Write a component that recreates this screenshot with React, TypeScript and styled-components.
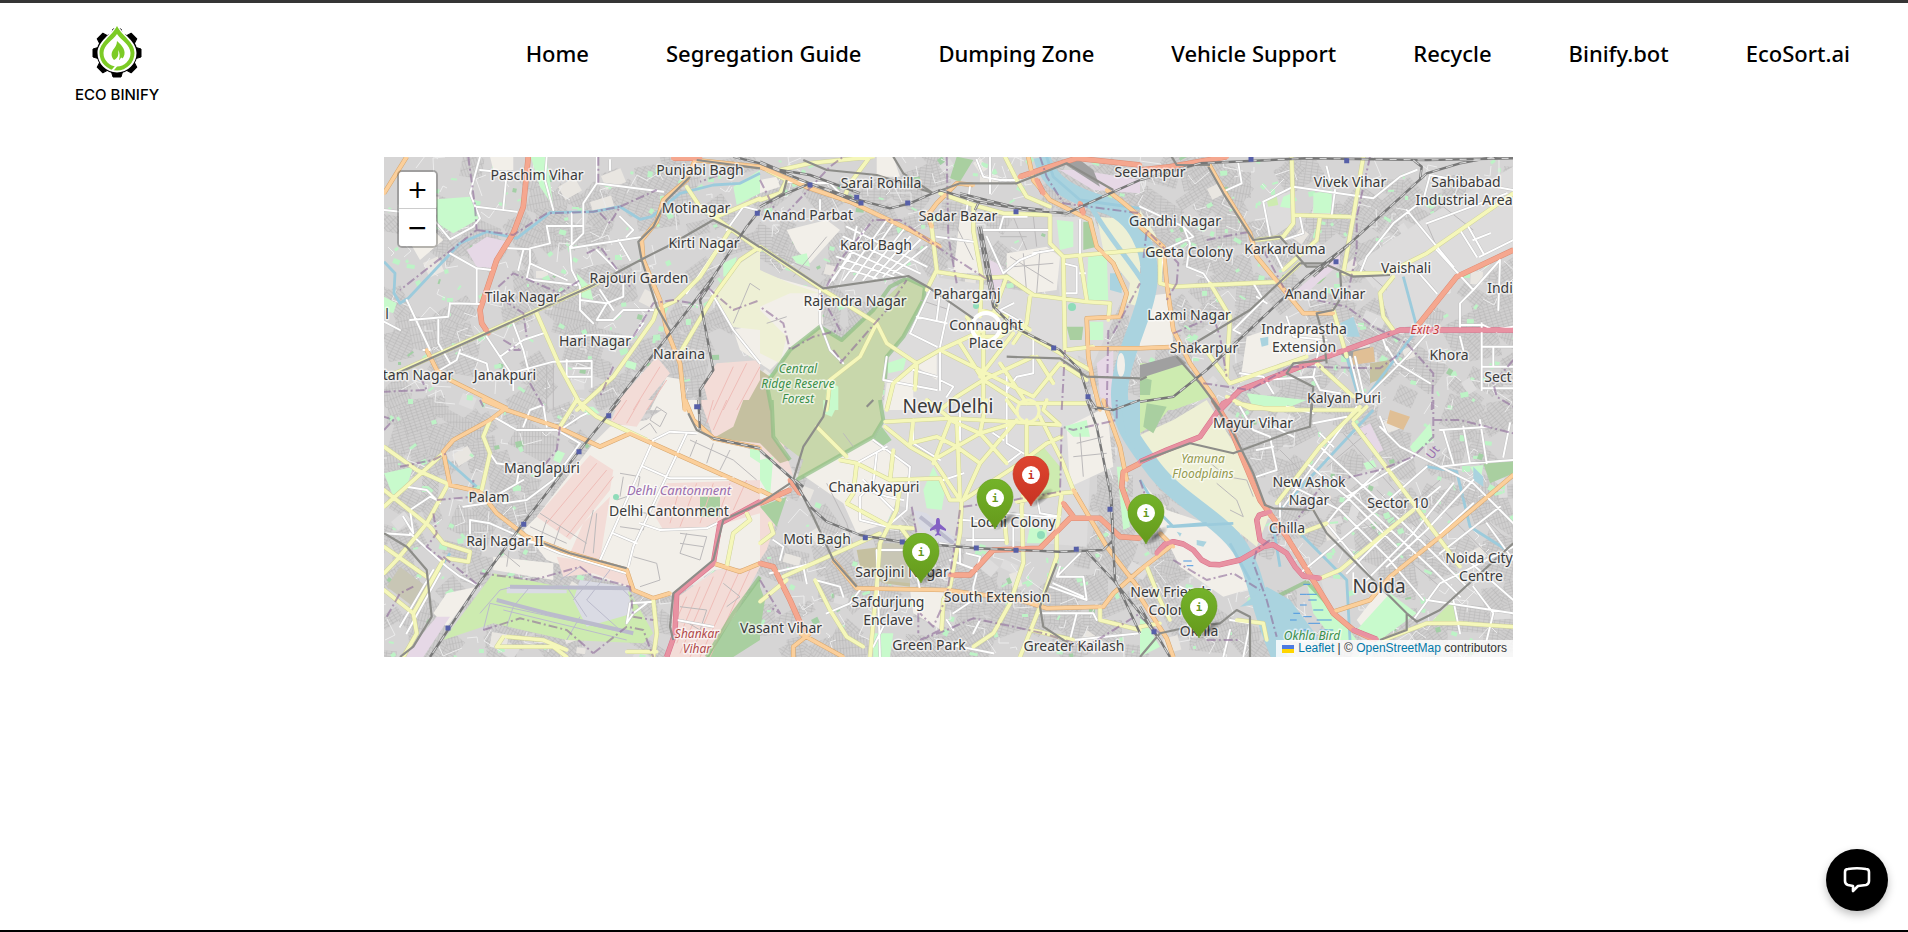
import React from "react";
import styled, { createGlobalStyle } from "styled-components";

const GlobalStyle = createGlobalStyle`
  *, *::before, *::after { box-sizing: border-box; }
  body { margin: 0; background: #fff; color: #000; font-family: "Noto Sans", sans-serif; }
`;

const Page = styled.div`
  min-height: 100vh;
  display: flex;
  flex-direction: column;
  border-top: 3px solid #353535;
  border-bottom: 2px solid #000;
`;

const Header = styled.header`
  display: flex;
  justify-content: space-between;
  align-items: flex-start;
  padding: 22px 58px 0 75px;
  margin-bottom: 52px;
`;

const Brand = styled.a`
  display: flex;
  flex-direction: column;
  align-items: center;
  gap: 6px;
  height: 80px;
  color: #000;
  text-decoration: none;
  font: 500 15px/20px Inter, sans-serif;
`;

const Nav = styled.nav`
  display: flex;
  gap: 77px;
  padding-top: 12px;
`;

const NavLink = styled.a`
  color: #000;
  text-decoration: none;
  font-size: 22px;
  font-weight: 500;
  line-height: 32px;
  white-space: nowrap;
`;

const Main = styled.main`
  flex: 1;
  padding: 0 395px 0 384px;
`;

const MapPanel = styled.section`
  position: relative;
  height: 500px;
  overflow: hidden;
  background: #ddd;
`;

const MapCanvas = styled.svg`
  display: block;
  width: 100%;
  height: 100%;
  font-family: "Noto Sans", sans-serif;
`;

const ZoomControl = styled.div`
  position: absolute;
  top: 13px;
  left: 13px;
  display: flex;
  flex-direction: column;
  border: 2px solid rgba(0, 0, 0, 0.25);
  border-radius: 5px;
  background-clip: padding-box;
`;

const ZoomButton = styled.button`
  width: 37px;
  height: 37px;
  padding: 0;
  border: 0;
  border-bottom: 1px solid #ccc;
  border-radius: 3px 3px 0 0;
  background: #fff;
  color: #000;
  font: 25px/36px "DejaVu Sans", sans-serif;
  cursor: pointer;
  &:last-child {
    border-bottom: 0;
    border-radius: 0 0 3px 3px;
  }
`;

const Marker = styled.button<{ $dx: number; $dy: number }>`
  position: absolute;
  left: calc(50% + ${(p) => p.$dx}px);
  top: ${(p) => p.$dy}px;
  width: 60px;
  height: 54px;
  margin: -50px 0 0 -19px;
  padding: 0;
  border: 0;
  background: none;
  cursor: pointer;
  svg { display: block; }
`;

const Attribution = styled.div`
  position: absolute;
  right: 0;
  bottom: 0;
  display: flex;
  align-items: center;
  gap: 4px;
  padding: 0 6px;
  background: rgba(255, 255, 255, 0.8);
  color: #333;
  font: 12px/17px "Liberation Sans", Arial, sans-serif;
  a { color: #0078a8; text-decoration: none; }
`;

const ChatButton = styled.button`
  position: fixed;
  right: 20px;
  bottom: 21px;
  display: grid;
  place-items: center;
  width: 62px;
  height: 62px;
  padding: 0;
  border: 0;
  border-radius: 50%;
  background: #000;
  box-shadow: 0 4px 8px rgba(0, 0, 0, 0.25);
  cursor: pointer;
`;

/* ---------- map data ---------- */

type Sheet = "A" | "B" | "C" | "D" | "E" | "F";
const origins: Record<Sheet, [number, number]> = {
  A: [380, 150], B: [760, 150], C: [1140, 150],
  D: [380, 400], E: [760, 400], F: [1140, 400],
};

/** Converts survey points (a third of a map unit, relative to a sheet) into map units. */
const place = (sheet: Sheet, d: string) => {
  const [ox, oy] = origins[sheet];
  return d.replace(/(-?\d+) (-?\d+)/g, (_, x, y) => `${(ox + +x / 3).toFixed(1)} ${(oy + +y / 3).toFixed(1)}`);
};
type Layer = Partial<Record<Sheet, string>>;
const merge = (layer: Layer) => (Object.keys(layer) as Sheet[]).map((k) => place(k, layer[k]!)).join("");

const areas: [string, Layer][] = [
  ["#dddcdc", { B: "M520 380L900 440 960 640 1000 780 370 780 380 620ZM870 200L1000 200 1100 420 1000 640 920 600Z", E: "M370 0L1000 0 980 440 470 400 460 330 360 300 240 180Z", C: "M650 340L860 200 1120 50 1120 290 960 370 840 520 760 540 720 430ZM370 160L455 120 460 220 400 260Z", F: "M540 530L620 540 630 700 560 600Z" }],
  ["#f2efe9", {
    A: "M1060 540L1140 520 1140 640 1080 600ZM860 680L910 690 910 780 810 780ZM330 20L400 20 400 60 340 60ZM80 260L160 240 190 270 120 330Z",
    B: "M0 370L180 420 190 520 90 600 30 660 0 640ZM350 20L400 20 420 80 350 80ZM740 310L860 290 900 320 890 420 820 430 740 370ZM600 200L640 200 660 370 580 370ZM80 240L200 210 240 240 150 340 110 300ZM0 90L50 80 60 110 0 130ZM380 700L460 650 460 780 370 780ZM470 650L530 610 530 690Z",
    C: "M0 440L90 430 100 590 0 590ZM320 560L440 520 560 560 560 600 420 640 300 700Z",
    D: "M690 80L800 60 890 0 960 0 960 90 1140 160 1140 500 1000 510 900 580 820 600 740 560 500 480 430 390 470 350 640 130ZM200 580L290 560 200 680 160 640ZM340 470L520 490 520 540 340 510Z",
    E: "M920 80L1040 20 1060 200 930 260ZM120 220L340 110 450 210 380 370 290 400 250 310ZM450 570L550 570 545 690 460 640ZM0 160L100 240 80 270 0 310Z",
    F: "M0 240L80 330 200 370 300 420 350 560 250 590 120 500 60 380ZM650 660L720 570 760 600 680 700Z",
  }],
  ["#eef0d5", { A: "M1080 340L1140 300 1140 540 1050 530 1000 430Z", B: "M0 360L90 400 180 430 90 430 0 470ZM1010 200L1140 210 1140 470 1100 460 1110 400 1030 300ZM0 480L80 560 60 640 0 610Z", C: "M0 180L50 260 0 300Z", F: "M0 105L100 60 200 0 300 160 390 340 350 440 240 350 150 310 60 260 0 160Z" }],
  ["#f3dcd7", {
    A: "M830 620L870 670 780 780 690 780ZM1010 640L1140 630 1140 780 990 780 970 700Z",
    D: "M630 165L700 210 690 270 570 420 470 350ZM720 0L820 0 770 80 690 70ZM960 0L1140 0 1140 150 1000 110ZM860 250L1140 240 1140 340 1000 380 850 390 820 340ZM530 470L740 500 750 560 640 520 550 530ZM610 370L690 290 660 480 570 460ZM880 600L1010 510 1140 500 1000 771 870 771Z",
    E: "M0 0L30 0 100 230 0 150ZM0 320L60 330 20 450 0 480Z",
  }],
  ["#c5c0a0", { D: "M1090 0L1140 0 1140 130 1000 115 1060 80Z", A: "M1090 780L1140 690 1140 780Z", E: "M0 0L35 0 40 110 90 180 60 190 0 130ZM290 450L450 430 450 560 370 550 300 500Z", B: "M0 660L30 680 35 780 0 780Z", C: "M690 640L750 630 740 680 690 700Z" }],
  ["#c8c6b5", { D: "M60 500L140 560 100 620 20 560ZM490 590L600 590 590 640 520 620Z", E: "M350 430L450 430 450 550 360 540Z" }],
  ["#c8d7ab", {
    B: "M440 385L495 410 490 450 430 560 380 620 375 690 360 780 35 780 20 700 90 600 180 530 245 570 340 480Z",
    E: "M35 0L350 0 370 60 340 110 110 240 130 180 40 110Z",
  }],
  ["#cdebb0", { D: "M340 520L540 560 750 575 820 700 790 730 560 720 340 670 190 720Z", C: "M0 640L130 640 210 740 100 780 0 780ZM380 150L410 140 415 165 385 170Z", E: "M790 200L850 140 900 200 900 280 830 290Z", F: "M0 0L110 0 60 60 0 100ZM870 670L940 600 955 670Z" }],
  ["#c8facc", {
    A: "M170 148L270 140 300 205 220 250 172 220ZM452 20L500 20 520 170 480 110ZM1060 110L1140 60 1140 130 1070 165ZM590 370L630 410 640 450 600 440ZM12 440L50 460 40 490 12 480ZM1030 340L1070 320 1060 370 1030 380ZM740 630L770 640 765 660 735 650Z",
    B: "M985 310L1040 310 1045 450 980 450ZM380 640L440 620 430 660 385 670ZM990 515L1030 515 1030 570 990 570ZM200 690L235 710 235 780 195 780ZM95 320L140 310 150 350 110 340ZM890 210L940 215 940 290 900 300Z",
    C: "M520 130L575 120 575 190 520 190ZM320 730L500 750 440 775 340 775ZM430 140L455 130 450 175 420 170Z",
    D: "M12 220L100 200 80 260 40 290ZM530 150L555 160 540 190 520 180ZM600 20L640 20 660 40 620 45ZM1110 130L1140 150 1140 190 1110 170Z",
    E: "M490 270L520 200 555 270 545 330 500 325ZM810 380L860 390 860 430 800 430ZM190 0L235 10 215 50 190 40ZM910 80L980 60 990 110 940 110ZM1070 200L1085 200 1110 380 1090 390ZM340 700L400 700 390 771 340 771ZM0 180L40 170 30 290 0 240Z",
    F: "M500 545L560 600 650 720 580 720 520 640ZM650 690L750 580 830 640 720 720ZM810 140L870 70 880 120 820 160ZM990 200L1030 195 1020 250ZM670 190L700 180 710 200 680 210ZM0 640L60 740 0 771Z",
  }],
  ["#a9cfa0", { B: "M590 20L640 30 600 95 570 85ZM920 530L970 530 965 570 930 570ZM970 215L1000 215 1010 290 970 300Z", D: "M1140 530L1140 720 1060 771 980 771ZM960 290L1020 290 1020 350 960 350Z", E: "M340 120L365 80 395 120 365 140ZM0 320L80 290 50 380ZM0 560L15 600 0 690Z", F: "M20 10L80 20 40 100 10 80ZM1030 190L1120 180 1120 220 1050 250Z", C: "M0 680L35 690 30 735 0 735ZM500 410L560 380 540 400Z" }],
  ["#e6d8e6", { A: "M260 300L320 260 385 275 345 355 290 350Z", B: "M900 60L960 60 1140 90 1140 130 1000 120ZM690 330L730 350 720 450 690 450ZM1010 640L1060 600 1060 780 1020 740Z", C: "M470 420L600 310 600 340 510 420Z", D: "M170 650L210 650 130 771 70 771Z", F: "M650 90L690 70 730 150 710 160Z" }],
  ["#dadbe4", { D: "M600 540L740 560 760 640 620 680 580 600ZM380 560L560 570 560 580 380 580Z", E: "M460 330L500 340 600 430 540 430 480 380Z" }],
  ["#a0a0a0", { B: "M910 40L960 30 1000 60 1020 110Z", C: "M0 645L110 615 140 640 0 685ZM600 610L690 590 690 605 620 630Z" }],
  ["#e0bf95", { C: "M640 605L700 590 705 635 635 645Z", F: "M750 30L810 50 790 90 740 70Z" }],
];

const hatch: Layer = {
  A: "M840 650L760 780M860 690L800 780M1060 650L1000 780M1100 640L1030 780M1140 650L1070 780",
  D: "M650 190L500 370M680 210L530 390M700 230L560 410M740 0L700 60M780 0L740 70M1000 0L980 70M1040 0L1000 90M900 260L870 370M950 250L900 380M1000 250L960 370M1050 250L1010 360M1100 240L1060 330M920 590L880 680M960 560L890 730M1000 530L900 760M1040 510L930 771M1080 510L960 771M1110 510L990 771",
};

const forestEdge: Layer = {
  B: "M375 690L380 620 430 560 490 450 495 410 440 385 390 410 340 480 245 570 180 530 90 600 20 700 35 780",
  E: "M360 0L370 60 340 110 110 240M35 0L40 110 90 180",
  F: "M500 545L380 605 400 720M500 545L570 620",
  D: "M1140 530L1060 640 980 771",
};

const water: Layer = {
  B: "M1050 370L1085 370 1085 430 1050 420Z",
  C: "M600 520L640 500 660 560 620 560ZM360 565L385 560 385 585 365 590Z",
  F: "M300 620L380 560 450 600 540 720 400 720 370 610ZM110 395L125 400 120 410ZM170 420L200 425 190 440 170 435ZM1000 200L1030 230 1030 260 1000 240Z",
  E: "M1080 0L1140 0 1140 170 1100 110Z",
};
const canal: Layer = {
  A: "M12 335L45 370 42 430 60 460 85 445 240 280 320 245 410 265 510 188 640 185 720 170 780 208 815 200 900 130 1000 105 1080 100 1140 70",
  B: "M1140 175L960 150 880 80 860 20",
  C: "M830 540L740 660 680 740M620 620L655 740M790 380L830 530",
  F: "M700 30L420 330M480 400L620 540 630 720M860 200L950 215 990 380 1100 450M0 240L60 340 100 380 280 370M270 430L330 540M400 380L420 500M80 380L200 370",
  D: "M200 180L290 260M210 460L170 520",
};

const white: Layer = {
  A: "M12 180L150 195 210 268 280 230 300 205 270 130 300 20M300 60L400 70M290 170L410 185M380 70L370 175M500 20L495 90 520 180M650 20L650 100 610 160 610 250 570 290 575 360 600 410 600 480 640 520M650 100L850 125M570 295L780 262M575 190L575 290M500 228L610 228M430 300L415 360M385 295L450 298 450 340 440 385 460 390 590 405M500 228L510 280 450 295M650 300L710 360M720 200L760 240 740 260M715 270L750 330M210 310L290 355 335 360M290 355L290 460M80 450L150 600 130 600M210 460L300 462M90 510L205 500 210 460M175 510L175 580 210 640M12 515L60 540M240 600L230 630 180 660M240 610L320 640 330 690M320 560L400 680 400 720M360 620L430 570 490 550M400 520L430 600 450 680M390 670L520 635 635 632 635 710M560 630L560 680 630 680M580 655L630 655M550 560L640 555 760 560 790 520M690 30L690 60M600 450L680 460 730 440 730 400M680 460L650 510 700 510 730 480 820 480M660 420L700 480M450 340L560 390M990 420L1060 540 1140 640M1040 240L1090 170 1130 180M1050 240L920 430",
  B: "M200 410L270 320 290 230M220 390L320 230M250 390L380 210M280 390L400 220M310 390L430 240M340 385L450 260M370 380L480 270M400 370L500 290M260 230L500 350M250 260L480 370M240 290L440 380M230 320L400 380M240 350L350 385M510 420L450 550M540 430L530 510M570 450L540 590M470 500L560 520M450 550L530 590M380 620L370 690 530 720M540 600L540 720M650 30L670 80 720 90 770 90M690 130L690 20M630 110L620 180M670 240L870 240M720 235L730 200 800 200M680 260L730 370M820 310L880 300M730 370L780 330 830 310M910 340L950 350 950 430 920 430M960 370L975 370M960 210L960 320M180 420L180 520 210 600 250 640M260 150L210 100 80 95M180 150L180 180M530 260L640 275M740 720L770 680 820 670 820 560M740 780L740 680M460 660L530 680M540 690L580 710 560 740M760 460L720 480 790 520",
  C: "M0 170L130 230 160 260 70 300M130 230L150 280 140 350 190 370 210 400M295 40L305 100 250 125M370 155L460 110 700 145 780 80 830 60M370 155L390 260M585 120L575 195M600 100L570 90 560 50M390 280L430 360M480 200L490 250 430 270M660 370L680 320 760 220 850 150 870 75M800 180L940 350M860 220L1100 130M890 300L1000 420 960 460 960 530M960 240L1010 320M985 230L1030 310M1000 420L1080 330 1075 480M1000 270L1050 250M1020 320L1120 270M870 75L1120 120M300 550L280 540 370 450 340 400M350 440L380 460M440 500L460 560 560 570M1025 520L1025 720M1060 540L1120 530M1025 590L1120 590M1025 650L1120 650M1025 715L1120 715M1060 590L1060 650M960 525L1030 525 1070 545M870 540L800 620 680 740M740 590L770 640 870 700M730 570L740 600M300 670L370 680 400 730M520 680L540 720 600 730M370 690L520 680 540 580M630 620L660 740M645 620L670 730M70 300L60 400M820 350L890 430M970 600L960 560",
  D: "M340 50L410 90 530 90 600 130M600 130L520 240 440 300 370 310M820 120L660 480M920 100L760 440 745 500M790 200L870 235 1060 235M820 120L870 95 950 100M840 390L980 385 1010 370M780 370L840 390M700 400L770 430M820 605L750 610 740 670 760 640 800 610M80 260L140 270 180 310M70 350L100 400 90 330 150 290 170 300M90 400L200 500 240 530 300 560M270 360L330 370 420 410 540 460 740 520M430 80L450 30 490 15 500 80M540 90L600 50 620 40M250 320L320 310 360 280 430 240M330 160L350 190 420 200 410 250M490 430L340 420M160 510L60 680M180 520L80 700M12 400L90 405M270 360L270 400M890 660L1000 680",
  E: "M600 0L600 120M740 190L780 160M460 70L460 130 540 180M740 0L740 130 790 160M340 120L450 200 440 330 380 380 300 360 300 290 340 250 350 160M290 190L380 140M260 250L380 290 430 300M310 240L400 330M350 450L360 770M360 450L500 450M640 350L640 440M610 360L740 370M740 340L850 350 900 350M620 420L740 420M760 370L760 450M830 290L840 340 900 350M540 430L600 440 600 490M620 460L660 470 650 510 570 480M650 520L640 560 640 600 580 640M890 530L970 530 980 600 870 560M880 550L970 590M900 500L890 530 960 460M840 640L1000 640 1010 660M950 640L930 720M300 570L270 610 200 640M160 490L30 520M130 500L140 550M165 540L240 560 250 590M370 680L340 740M660 660L640 700M550 730L700 760M580 690L560 660M940 720L1140 700M550 240L610 220M470 520L480 570M700 100L730 120M60 480L70 440 40 420",
  F: "M300 20L340 90 390 110 410 210 350 230M360 60L460 110M350 150L400 140M520 70L620 50M540 100L580 140M540 140L780 360 980 560M500 190L620 290 770 440M580 230L720 360 880 510 960 590M440 250L600 330 740 470 850 600M560 370L700 540M600 440L720 560M720 50L740 100 720 80 780 140 900 200 1000 250 1080 330 1120 370M860 200L700 340 480 520M900 260L780 360 620 520M940 250L820 400 680 540M1000 240L860 390 740 500M1080 320L900 460M820 170L620 290M720 210L600 320 560 370M900 200L990 190 1120 180M910 90L940 190M970 80L990 190M1020 60L1040 190M1110 70L1090 170M900 90L1050 80M1040 370L1120 480M960 460L1120 600M860 600L1120 640M940 600L960 700M1000 560L1060 640 1040 720M820 660L900 550 1120 440M420 310L420 350M640 570L640 520M900 400L1000 310M270 660L330 670 310 771M440 20L520 40M120 560L200 600M250 771L270 690M650 20L430 320",
};

const yellow: Layer = {
  A: "M470 490L540 650 610 780M590 780L700 680 820 510 830 480 890 450 960 380 1050 240M905 600L1000 440 1080 330 1140 290M920 110L960 170 1050 235 1140 300M1010 200L1140 145M12 685L280 565 630 410 700 375",
  B: "M0 290L190 420 350 520 380 580 470 640 540 600 660 545M350 520L300 620 210 690 200 780M510 190L530 360 500 420M530 365L660 385 740 380 820 435 980 455 1050 460 1045 510M640 170L640 240 665 380 660 500M870 195L870 280 910 320 1140 300M910 320L915 600M960 320L980 450M735 20L770 90 800 140 870 170M540 130L640 165 730 190 870 195M740 380L700 490M810 440L800 520 760 580M670 540L670 780M760 530L990 660M540 600L820 740M900 640L820 740M830 620L880 700M590 740L670 690 820 620M470 640L465 720M380 780L400 700 470 640M670 690L780 760 980 760M720 560L780 520 810 540M620 500L660 560 720 560 740 500 660 480M0 150L60 130 80 90 20 60M150 40L340 20M330 20L270 100 250 150M150 40L60 60M590 740L540 780M900 640L980 690M915 600L1000 590M760 550L660 680M600 580L670 690M800 760L720 640",
  C: "M455 20L460 220 430 260 350 270M460 195L630 200M540 200L530 270 430 360M670 20L640 200 610 370 740 370 860 310 1120 130M0 300L60 300 60 400 100 410 420 395 480 340M210 400L270 500 260 680M190 590L270 700M580 480L620 620M760 380L720 430 730 500 760 540M270 700L500 620M530 640L640 740M260 740L330 775 460 775",
  D: "M12 140L110 210 205 252M330 60L310 110 330 160 305 270M590 0L650 50 800 120M190 160L12 320M12 270L150 380 190 430 270 455 265 485 200 475M200 260L140 370 50 480 12 520M12 440L140 530M12 570L100 640M190 480L100 640 110 700 70 771M1100 340L1110 360 1060 400 1040 500M820 600L830 700 820 771M370 710L350 740 410 740 520 740 560 771M380 710L490 720 560 750M740 755L830 755M540 80L590 0",
  E: "M375 65L570 55 760 65 900 75M375 80L450 140 520 180 600 300M520 180L660 100 760 70M520 190L570 60M590 60L600 290M610 300L660 190 770 60M450 140L460 60M450 130L530 110 590 140 660 190M570 60L660 100 740 190M660 100L680 0M610 300L780 190 860 130 905 110M800 60L800 200 785 320 790 490 750 610 700 700 640 740M840 50L905 180 940 270M500 0L570 55M240 180L290 190 390 240 540 235 570 300 610 300M290 190L280 280 260 310M170 80L260 170M260 310L390 380 460 385M420 260L410 330 360 430 350 560 330 771M605 300L600 400 570 560 550 600 545 690M70 530L360 400M0 605L80 540M165 540L210 630 260 710 310 740M905 280L890 400 890 470 840 620 780 771M770 305L900 280 945 275M815 690L940 720M860 0L850 30 900 75M740 0L770 40M390 240L400 150M730 320L740 430M1020 620L1020 660 1140 690M450 420L420 380M0 430L40 400 30 370",
  F: "M660 20L540 140 410 310M640 70L820 310 960 500M290 10L400 30 660 30M640 60L680 20M480 400L560 370M540 535L600 510 820 330M730 720L860 670 960 670 1120 680M20 500L60 600 90 660M380 720L370 670 290 660M0 680L60 670",
};

const orange: Layer = {
  A: "M80 20L12 130M945 30L920 90 850 150 830 215 785 270 790 330 840 450 860 540 900 640 915 780M945 30L1140 50M140 600L170 660 210 690 380 775",
  B: "M0 50L150 115 270 155 450 240 540 290M500 200L530 160 560 130 590 100 640 105M500 190L515 230M805 20L820 90 870 150 950 190 990 210 1010 290 1060 340 1100 430 1080 500 980 505 985 620 1000 700 1020 780M985 595L1140 595M1040 120L1080 150 1140 200",
  C: "M200 30L250 120 330 250 350 320 440 430 490 490 580 490M0 230L70 290 80 400 100 540 150 640 220 740 240 780M0 595L110 590",
  D: "M310 0L380 30 530 80 660 140 750 100 1140 275M370 30L330 60 220 120 190 155 210 255 300 275 350 340 440 410 570 460 740 510 760 570 820 595 870 580M1000 490L1080 515 1140 490M915 0L940 60 1000 115 1140 145",
  E: "M220 480L290 565 560 570 780 600 860 625 1030 620 1060 580 1140 510M940 270L1040 440 1140 570M1030 0L1080 140 1100 240M120 700L250 771M100 771L100 740 150 700M0 270L60 300",
  F: "M580 635L690 600 750 530 900 410 1120 225M0 510L90 440M0 590L80 715 100 771M60 400L100 440",
};

const trunk: Layer = {
  A: "M445 20L430 170 400 250 350 330 300 480 305 520 325 550M880 25L960 25",
  B: "M780 80L870 50 950 25 1140 45M830 90L850 130M960 160L970 190",
  C: "M0 60L90 50 260 20M830 530L950 380 1120 300",
  E: "M0 490L40 500 90 600 130 690M570 525L630 525 700 450 840 445 930 355 1020 355 1080 410 1140 415M0 310L90 270M1140 190L1090 215 1085 260 1110 330M910 310L940 350M90 240L120 280",
  F: "M220 0L270 80 310 180 360 300 440 410 580 640 640 690 700 718",
};
const motorway: Layer = {
  C: "M240 780L300 720 560 620 780 540 1120 540",
  D: "M1140 305L1020 370 1000 490 890 580 885 700 860 771",
  F: "M0 185L80 150 180 110 250 10 270 0M50 460L75 432 100 425 130 432 160 450 185 480 210 493 240 494 300 480 370 440 400 434 440 460 465 500 490 528 540 535M390 335L358 345 350 360 360 420 385 435M640 690L710 718",
};

const metro: Layer = {
  A: "M12 688L280 568 630 410 800 320 860 290 1000 210 1060 240 1140 292M930 80L860 150 820 230 775 275 785 330 830 470 875 550M950 30L1140 55",
  B: "M0 290L190 415 445 378 510 415 640 505M130 30L200 60 350 75 520 130M400 20L430 70 520 130 600 100 770 100 920 40 1060 120M740 620L900 625 980 680 1140 685M80 90L70 130 0 170",
  C: "M205 50L250 130 340 270 420 260 500 350 560 350M130 600L330 480 480 340 550 340 640 380 750 375M600 360L605 440 580 480 530 490 550 560 560 640M560 630L460 640 440 670 520 710 515 780M110 620L180 700 240 780M0 690L20 680M95 20L110 45 210 45",
  D: "M1140 310L1030 360 1000 480 880 580 870 680 880 720M12 400L80 440 140 510 155 650 100 740 60 771M490 430L570 460 740 505M925 40L950 90 1000 115 1140 145",
  E: "M0 310L90 250M105 240L160 350 220 480 290 560M200 0L190 50 130 140 100 240M890 490L840 620 850 680 940 740M340 0L320 20",
  F: "M215 0L280 100 340 220 375 315 400 325 520 330 560 400 700 540 800 640 830 665 900 630 1120 430M0 185L150 130 280 160 440 100 510 80 515 0M0 771L60 700 150 680 240 670 290 630 330 650 330 771M800 640L800 690 720 720",
};

const rail: Layer = {
  A: "M690 780L870 550 1000 380 1100 230 1140 180M1000 390L960 450 1000 660 960 720 960 780M1060 20L1140 40",
  B: "M0 40L150 100 280 145 390 175 450 160 540 120M0 170L80 130 150 100 300 160M0 35L60 60 150 75 300 130M540 120L650 155 800 180 920 190 1050 130 1140 90M655 160L645 180M655 230L680 370 700 470 760 530 900 600 960 660 985 740 1010 780M662 230L690 370 710 470M600 130L760 170 850 180",
  C: "M0 90L180 40 500 25 860 30 1120 25M0 755L100 740 200 660 360 510 500 380 630 280 860 70 960 40 1120 10M520 380L625 285M820 30L845 50 840 90",
  D: "M720 0L600 150 430 370 290 560 150 771M955 0L960 90M1000 115L1140 145",
  E: "M0 150L100 240 150 320 200 365 300 405 420 425 650 445 900 455 1030 450 1060 420 1055 300 1010 80 980 0M980 455L1060 540 1140 640M990 20L1060 30 1140 0M1050 250L1065 540 1140 700M105 240L130 260",
  F: "M0 640L60 720 90 771M0 620L40 690",
};

const boundary: Layer = {
  A: "M265 20L285 170 290 240 60 420M290 240L400 255 500 190 640 185 720 170M655 20L655 100M660 190L690 220 720 170 830 120M355 410L400 370 540 430 600 390M620 310L660 290 750 410M370 450L430 490 440 560M760 560L820 460 880 450 940 460 980 410 1060 480 1140 450M700 650L660 740M120 680L140 720 12 725M450 700L490 770M370 570L420 600 380 600M1060 60L960 95",
  B: "M0 90L60 210 210 50 250 20M200 410L240 330 340 210 420 210 560 310 700 400M560 20L565 260 590 400M180 430L240 540 160 560 90 600 70 520 0 470M240 640L380 480 440 390M840 20L860 80 910 160 1140 190M1060 550L1140 400M1045 540L1040 780M915 600L905 780M220 600L250 640",
  C: "M690 20L650 200 650 300 620 450M530 450L620 470 700 530 800 580 880 670 875 780M100 550L220 500 240 560 260 680M200 270L330 245M110 400L80 450M110 400L115 340 20 240 10 330M370 300L440 430M190 700L330 720 450 650M450 650L720 655 780 610M1120 630L1060 700 1070 740 1120 770",
  D: "M12 90L40 60 12 50M540 80L530 150 490 200M300 0L310 20M190 470L300 560M160 340L170 400 140 440 190 480M300 520L460 540 600 500 640 530 750 560 760 650 820 660M20 650L60 580 100 560M310 690L420 655 560 690 640 760M640 760L740 680 790 690 820 771M60 200L160 180 200 160M170 300L280 290 280 240",
  E: "M610 320L760 300 900 275 905 80 940 90 1070 60 1070 0M455 320L475 430M600 330L560 590 520 680 480 640M480 720L560 690 640 655 760 680 850 700 980 740 1140 640M540 690L480 720M0 540L60 640 30 620M475 640L475 700",
  F: "M880 0L880 110 820 170 720 210 550 250 470 360 350 450 340 490 380 600 410 710M100 480L200 540 280 520 360 570M880 60L960 60 1120 100M200 720L300 720M0 240L20 300 0 320M0 650L60 700",
};

const lane: Layer = {
  A: "M1060 520L1110 400 1140 420M500 640L500 780M520 640L520 780",
  D: "M810 60L830 20 860 40 840 80 810 60M780 90L810 70 830 100M930 120L1060 180 1130 240M950 120L930 170M1000 130L980 190M1050 150L1020 210M720 220L780 230 770 280 710 300M730 230L720 290M740 330L800 340 790 390 720 380M900 400L980 410 960 480 900 460 920 400M900 430L970 440M760 470L830 490 840 540 780 560M480 340L620 430M450 380L560 430M500 360L480 420M540 380L520 440M640 330L610 460M650 340L640 460M900 620L980 630 960 690 910 660M1030 550L1080 590 1040 620M430 330L450 350M390 430L380 500M360 450L420 500",
  C: "M650 340L740 420M860 220L890 290M910 170L1000 240",
  F: "M420 150L600 330M610 100L800 310M560 200L680 100M650 350L900 560M710 270L870 420M880 300L1080 500M620 480L900 240M930 250L1100 420M200 180L260 230 320 240 340 290M230 250L290 300 310 350 270 330",
  E: "M280 440L260 370 200 250M250 100L280 140M950 130L1030 110M940 170L1040 160M960 100L970 230",
  B: "M60 320L150 360M100 380L200 260M750 320L880 400M790 310L800 430M840 300L830 430M760 350L880 340M590 230L640 330M920 340L945 350M480 450L570 480M20 520L80 500M820 200L830 290M760 200L800 300M720 260L800 260",
};

const runway: Layer = { D: "M390 560L750 565M350 600L500 640 760 700", E: "M480 350L580 430" };
const taxiway: Layer = { D: "M300 640L360 570 400 560M310 690L330 610 700 690M370 630L740 720M450 560L400 620M560 560L620 650M640 530L580 600M690 510L620 600 720 690M400 620L380 680M600 650L560 720M720 560L760 600 740 660M540 540L600 500 650 540" };
const marsh: Layer = { F: "M490 553L510 553M480 583L500 583M500 583L530 583M480 615L500 615M505 600L530 600M520 630L550 630M460 640L480 640M490 650L515 650M450 660L470 660M530 660L575 660M505 670L540 670M540 690L580 690M480 690L510 690M130 483L155 483M140 497L160 497M570 640L590 640" };

const streets: { id: string; layer: Layer; width: number; fill: string; casing: string }[] = [
  { id: "minor", layer: white, width: 1.9, fill: "#fff", casing: "#c4c4c4" },
  { id: "secondary", layer: yellow, width: 3.6, fill: "#f5f7ba", casing: "#cfd29a" },
  { id: "primary", layer: orange, width: 3.6, fill: "#fbcf9b", casing: "#d8a66c" },
  { id: "trunk", layer: trunk, width: 4.6, fill: "#f5a78f", casing: "#dd8a72" },
  { id: "motorway", layer: motorway, width: 4.4, fill: "#e892a2", casing: "#d9708a" },
];

const stations: Layer = { A: "M1132 190h0M950 770h0", B: "M150 105h0M290 142h0M303 159h0M443 159h0M768 185h0M881 594h0M984 740h0", C: "M333 28h0M620 32h0M588 335h0", D: "M953 20h0M686 47h0M597 155h0M431 373h0M204 684h0", E: "M316 413h0M427 426h0M649 444h0M768 451h0M949 448h0M1050 328h0", F: "M42 695h0" };

/* Deterministic noise keeps the small streets and gardens the same on every render. */
const seeded = (seed: number) => () => {
  seed = (seed * 1664525 + 1013904223) % 4294967296;
  return seed / 4294967296;
};
const rnd = seeded(42);
const between = (a: number, b: number) => Math.round(a + rnd() * (b - a));
const blocks = Array.from({ length: 640 }, (_, i) => ({
  x: between(370, 1510), y: between(150, 650), w: between(14, 48), h: between(12, 36), a: between(-45, 45), p: i % 4,
}));
const plots = Array.from({ length: 90 }, () => ({
  x: between(384, 1500), y: between(157, 650), w: between(8, 22), h: between(6, 16), a: between(-45, 45), c: rnd() > 0.5 ? "#e9e6e1" : "#dedddd",
}));
const gardens = Array.from({ length: 720 }, () => ({
  x: between(384, 1512), y: between(157, 656), w: between(2, 8), h: between(2, 6), a: between(-40, 40), c: rnd() > 0.1 ? "#bdf3c6" : "#a3cfa5",
}));
const alleys = Array.from({ length: 620 }, () => {
  const x = between(384, 1512), y = between(157, 656), r = between(5, 22), t = rnd() * 6.3;
  return `M${x} ${y}l${Math.round(Math.cos(t) * r)} ${Math.round(Math.sin(t) * r)} ${Math.round(-Math.sin(t) * r * 0.6)} ${Math.round(Math.cos(t) * r * 0.6)}`;
}).join("");

type Label = [number, number, string, ("city" | "park" | "plain" | "army" | "zone" | "exit" | "marsh")?];
const labels: Label[] = [
  [537, 180, "Paschim Vihar"], [700, 175, "Punjabi Bagh"], [696, 213, "Motinagar"], [704, 248, "Kirti Nagar"],
  [639, 283, "Rajouri Garden"], [522, 302, "Tilak Nagar"], [595, 346, "Hari Nagar"], [679, 359, "Naraina"],
  [418, 380, "tam Nagar"], [505, 380, "Janakpuri"], [387, 319, "l"],
  [881, 188, "Sarai Rohilla"], [808, 220, "Anand Parbat"], [958, 221, "Sadar Bazar"], [876, 250, "Karol Bagh"],
  [855, 306, "Rajendra Nagar"], [967, 299, "Paharganj"], [986, 330, "Connaught"], [986, 348, "Place"],
  [798, 373, "Central", "park"], [798, 388, "Ridge Reserve", "park"], [798, 403, "Forest", "park"],
  [948, 413, "New Delhi", "city"], [1150, 177, "Seelampur"], [1175, 226, "Gandhi Nagar"], [1189, 257, "Geeta Colony"],
  [1285, 254, "Karkarduma"], [1350, 187, "Vivek Vihar"], [1466, 187, "Sahibabad"], [1464, 205, "Industrial Area"],
  [1406, 273, "Vaishali"], [1325, 299, "Anand Vihar"], [1189, 320, "Laxmi Nagar"], [1304, 334, "Indraprastha"],
  [1304, 352, "Extension"], [1204, 353, "Shakarpur"], [1449, 360, "Khora"], [1500, 293, "Indi"],
  [1498, 382, "Sect"], [1425, 334, "Exit 3", "exit"], [1344, 403, "Kalyan Puri"], [1253, 428, "Mayur Vihar"],
  [1203, 463, "Yamuna", "marsh"], [1203, 478, "Floodplains", "marsh"], [1309, 487, "New Ashok"], [1309, 505, "Nagar"],
  [1398, 508, "Sector 10"], [1287, 533, "Chilla"], [1379, 593, "Noida", "city"], [1479, 563, "Noida City"],
  [1481, 581, "Centre"], [1312, 640, "Okhla Bird", "park"], [542, 473, "Manglapuri"], [489, 502, "Palam"],
  [505, 546, "Raj Nagar II"], [679, 495, "Delhi Cantonment", "zone"], [669, 516, "Delhi Cantonment"],
  [697, 638, "Shankar", "army"], [697, 653, "Vihar", "army"], [781, 633, "Vasant Vihar"], [874, 492, "Chanakyapuri"],
  [817, 544, "Moti Bagh"], [902, 577, "Sarojini Nagar"], [1013, 527, "Lodhi Colony"], [997, 602, "South Extension"],
  [888, 607, "Safdurjung"], [888, 625, "Enclave"], [929, 650, "Green Park"], [1074, 651, "Greater Kailash"],
  [1171, 597, "New Friends"], [1171, 615, "Colony"], [1199, 636, "Okhla"],
];
const labelStyles = {
  plain: { size: 14, fill: "#3b3b3b", italic: false },
  city: { size: 19, fill: "#3b3b3b", italic: false },
  park: { size: 12, fill: "#3a8f4a", italic: true },
  zone: { size: 13, fill: "#9a6fae", italic: true },
  army: { size: 12, fill: "#b04a4a", italic: true },
  exit: { size: 12, fill: "#c33b3b", italic: true },
  marsh: { size: 12, fill: "#949a4e", italic: true },
};

const CityMap = () => (
  <MapCanvas viewBox="384 157 1129 500" preserveAspectRatio="xMidYMid slice" role="img" aria-label="Map of New Delhi" fill="none" strokeLinejoin="round">
    <defs>
      {[3, 38, -32, 62].map((angle, i) => (
        <pattern key={angle} id={`mesh${i}`} width={5 + i} height={3} patternUnits="userSpaceOnUse" patternTransform={`rotate(${angle})`}>
          <rect width="10" height="4" fill="#cfcece" />
          <path d="M0 0H10M0 0V3" stroke="#b2b1b1" strokeWidth="1" />
        </pattern>
      ))}
    </defs>
    <rect x="384" y="157" width="1129" height="500" fill="#d6d5d5" />
    {blocks.map((b, i) => (
      <rect key={i} x={b.x} y={b.y} width={b.w} height={b.h} fill={`url(#mesh${b.p})`} transform={`rotate(${b.a} ${b.x} ${b.y})`} opacity="0.85" />
    ))}
    {[...plots, ...gardens].map((g, i) => (
      <rect key={i} x={g.x} y={g.y} width={g.w} height={g.h} fill={g.c} transform={`rotate(${g.a} ${g.x} ${g.y})`} />
    ))}
    <path d={alleys} stroke="#ececec" strokeWidth="1" />
    {areas.map(([fill, layer]) => <path key={fill} d={merge(layer)} fill={fill} />)}
    <path d={merge(hatch)} stroke="#efbdb8" />
    <path d={merge(forestEdge)} stroke="#8fbf83" strokeWidth="4" opacity="0.7" />
    <path d="M1042 157C1048 185 1075 196 1105 205S1152 250 1149 282 1124 350 1120 385 1132 440 1155 470 1222 520 1240 548 1255 600 1280 657" stroke="#aad3df" strokeWidth="17" />
    <path d="M1090 205C1110 240 1130 260 1145 285" stroke="#aad3df" strokeWidth="5" />
    <path d={merge(water)} fill="#aad3df" />
    <path d={merge(canal)} stroke="#9ccbdc" strokeWidth="2.8" />
    <ellipse cx="1121" cy="365" rx="4" ry="12" fill="#f2efe9" />
    <path d={merge(lane)} stroke="#bcbabb" />
    <path d={merge(runway)} stroke="#bbbbcc" strokeWidth="4" />
    <path d={merge(taxiway)} stroke="#bbbbcc" />
    <path d={merge(marsh)} stroke="#4a97e0" />
    {streets.map((s) => <path key={s.id} d={merge(s.layer)} stroke={s.casing} strokeWidth={s.width + 1} />)}
    {streets.map((s) => <path key={s.id} d={merge(s.layer)} stroke={s.fill} strokeWidth={s.width} strokeLinecap="round" />)}
    <circle cx="1028" cy="411" r="11" stroke="#f5f7ba" strokeWidth="3" />
    <circle cx="986" cy="327" r="14" stroke="#fff" strokeWidth="4" />
    <circle cx="1041" cy="535" r="4" fill="#8fdcb9" />
    <circle cx="976" cy="306" r="3" fill="#8fdcb9" />
    <circle cx="1072" cy="307" r="4" fill="#8fdcb9" />
    <circle cx="616" cy="497" r="3" fill="#8fdcb9" />
    <path d={merge(boundary)} stroke="#8d6a99" strokeWidth="2" strokeDasharray="9 3 2 3" opacity="0.6" />
    <path d={merge(metro)} stroke="#8d8d89" strokeWidth="2.2" />
    <path d={merge(rail)} stroke="#777" strokeWidth="2.4" />
    <path d={merge(rail)} stroke="#d5d5d5" strokeWidth="1.1" strokeDasharray="7 7" />
    <path d={merge(stations)} stroke="#565fa8" strokeWidth="5" strokeLinecap="square" />
    <path d="M938 518c2 0 2 2 2 6l6 5v2l-6-2-1 4 2 2v1l-3-1-3 1v-1l2-2-1-4-6 2v-2l6-5c0-4 0-6 2-6Z" fill="#8461c4" />
    <text x="1432" y="460" fontSize="12" fill="#9a6fae" transform="rotate(-52 1432 460)">Ut</text>
    {labels.map(([x, y, text, kind = "plain"]) => {
      const s = labelStyles[kind];
      return (
        <text key={`${text}${y}`} x={x} y={y} textAnchor="middle" fontSize={s.size} fontStyle={s.italic ? "italic" : "normal"} fill={s.fill} stroke="#fff" strokeOpacity="0.65" strokeWidth="3" paintOrder="stroke">
          {text}
        </text>
      );
    })}
  </MapCanvas>
);

const sites = [
  { name: "Sarojini Nagar", dx: -28, dy: 426, tone: "green" },
  { name: "Lodhi Colony", dx: 46, dy: 372, tone: "green" },
  { name: "Your location", dx: 82, dy: 349, tone: "red" },
  { name: "Sarai Kale Khan", dx: 197, dy: 387, tone: "green" },
  { name: "Okhla", dx: 250, dy: 481, tone: "green" },
];

const Pin = ({ tone }: { tone: string }) => {
  const [light, dark] = tone === "red" ? ["#de4530", "#c73322"] : ["#74b32a", "#65991b"];
  return (
    <svg width="60" height="54" viewBox="0 0 60 54" aria-hidden="true">
      <defs>
        <linearGradient id={`tone-${tone}`} x1="0" y1="0" x2="0" y2="1">
          <stop offset="0" stopColor={light} />
          <stop offset="1" stopColor={dark} />
        </linearGradient>
        <radialGradient id="pin-shade">
          <stop offset="0" stopColor="#000" stopOpacity="0.5" />
          <stop offset="1" stopColor="#000" stopOpacity="0" />
        </radialGradient>
      </defs>
      <ellipse cx="29" cy="42" rx="15" ry="5" fill="url(#pin-shade)" transform="rotate(-38 29 42)" />
      <path d="M19 50C16 42 1 33 1 18a18 18 0 0 1 36 0C37 33 22 42 19 50Z" fill={`url(#tone-${tone})`} stroke={dark} strokeWidth="0.6" />
      <circle cx="19" cy="19" r="9" fill="#fff" />
      <text x="19" y="23" textAnchor="middle" fontFamily="DejaVu Sans Mono, monospace" fontWeight="700" fontSize="11" fill={dark}>i</text>
    </svg>
  );
};

const teeth = [0, 45, 90, 135, 180, 225, 270, 315];
const Logo = () => (
  <svg width="52" height="54" viewBox="0 0 52 54" aria-hidden="true">
    <circle cx="26" cy="28" r="20.5" fill="#000" />
    {teeth.map((a) => (
      <path key={a} d="M20.500 9L22 4H30L31.500 9Z" fill="#000" stroke="#000" strokeLinejoin="round" transform={`rotate(${a} 26 28)`} />
    ))}
    <path d="M26 -1C31 9 45.500 16 45.500 28a19.500 19.500 0 0 1-39 0C6.500 16 21 9 26 -1Z" fill="#fff" />
    <path d="M26 1C31 11 43.500 17 43.500 28a17.500 17.500 0 0 1-35 0C8.500 17 21 11 26 1Z" fill="#7ccb25" />
    <path d="M26 9C30 15 39.500 20 39.500 28a13.500 13.500 0 0 1-27 0C12.500 20 22 15 26 9Z" fill="#fff" />
    <path d="M26 16C32 21 35 26 33 31C32 34 29 35 28 35C29 31 29 28 27 25C28 30 27 33 23 35C20 32 20 28 22 25C24 22 26 20 26 16Z" fill="#7ccb25" />
    <path d="M31 33C28 38 25 41 21 46" stroke="#fff" strokeWidth="2" fill="none" />
  </svg>
);

const navItems = ["Home", "Segregation Guide", "Dumping Zone", "Vehicle Support", "Recycle", "Binify.bot", "EcoSort.ai"];

export default function App() {
  return (
    <>
      <GlobalStyle />
      <Page>
        <Header>
          <Brand href="#home">
            <Logo />
            ECO BINIFY
          </Brand>
          <Nav aria-label="Main">
            {navItems.map((item) => <NavLink key={item} href="#">{item}</NavLink>)}
          </Nav>
        </Header>
        <Main>
          <MapPanel aria-label="Dumping zones">
            <CityMap />
            {sites.map((s) => (
              <Marker key={s.name} $dx={s.dx} $dy={s.dy} aria-label={s.name}>
                <Pin tone={s.tone} />
              </Marker>
            ))}
            <ZoomControl>
              <ZoomButton aria-label="Zoom in">+</ZoomButton>
              <ZoomButton aria-label="Zoom out">−</ZoomButton>
            </ZoomControl>
            <Attribution>
              <svg width="12" height="8" viewBox="0 0 12 8" aria-hidden="true">
                <path fill="#4C7BE1" d="M0 0h12v4H0z" />
                <path fill="#FFD500" d="M0 4h12v4H0z" />
              </svg>
              <span><a href="https://leafletjs.com">Leaflet</a> | © <a href="https://www.openstreetmap.org/copyright">OpenStreetMap</a> contributors</span>
            </Attribution>
          </MapPanel>
        </Main>
        <ChatButton aria-label="Open chat">
          <svg width="30" height="28" viewBox="0 0 30 28" fill="none" stroke="#fff" strokeWidth="2.6" strokeLinejoin="round" aria-hidden="true">
            <path d="M6 3C12 2 18 2 24 3Q27 3 27 6V15Q27 18 24 19L16 20L11 25V20L6 19Q3 18 3 15V6Q3 3 6 3Z" />
          </svg>
        </ChatButton>
      </Page>
    </>
  );
}
